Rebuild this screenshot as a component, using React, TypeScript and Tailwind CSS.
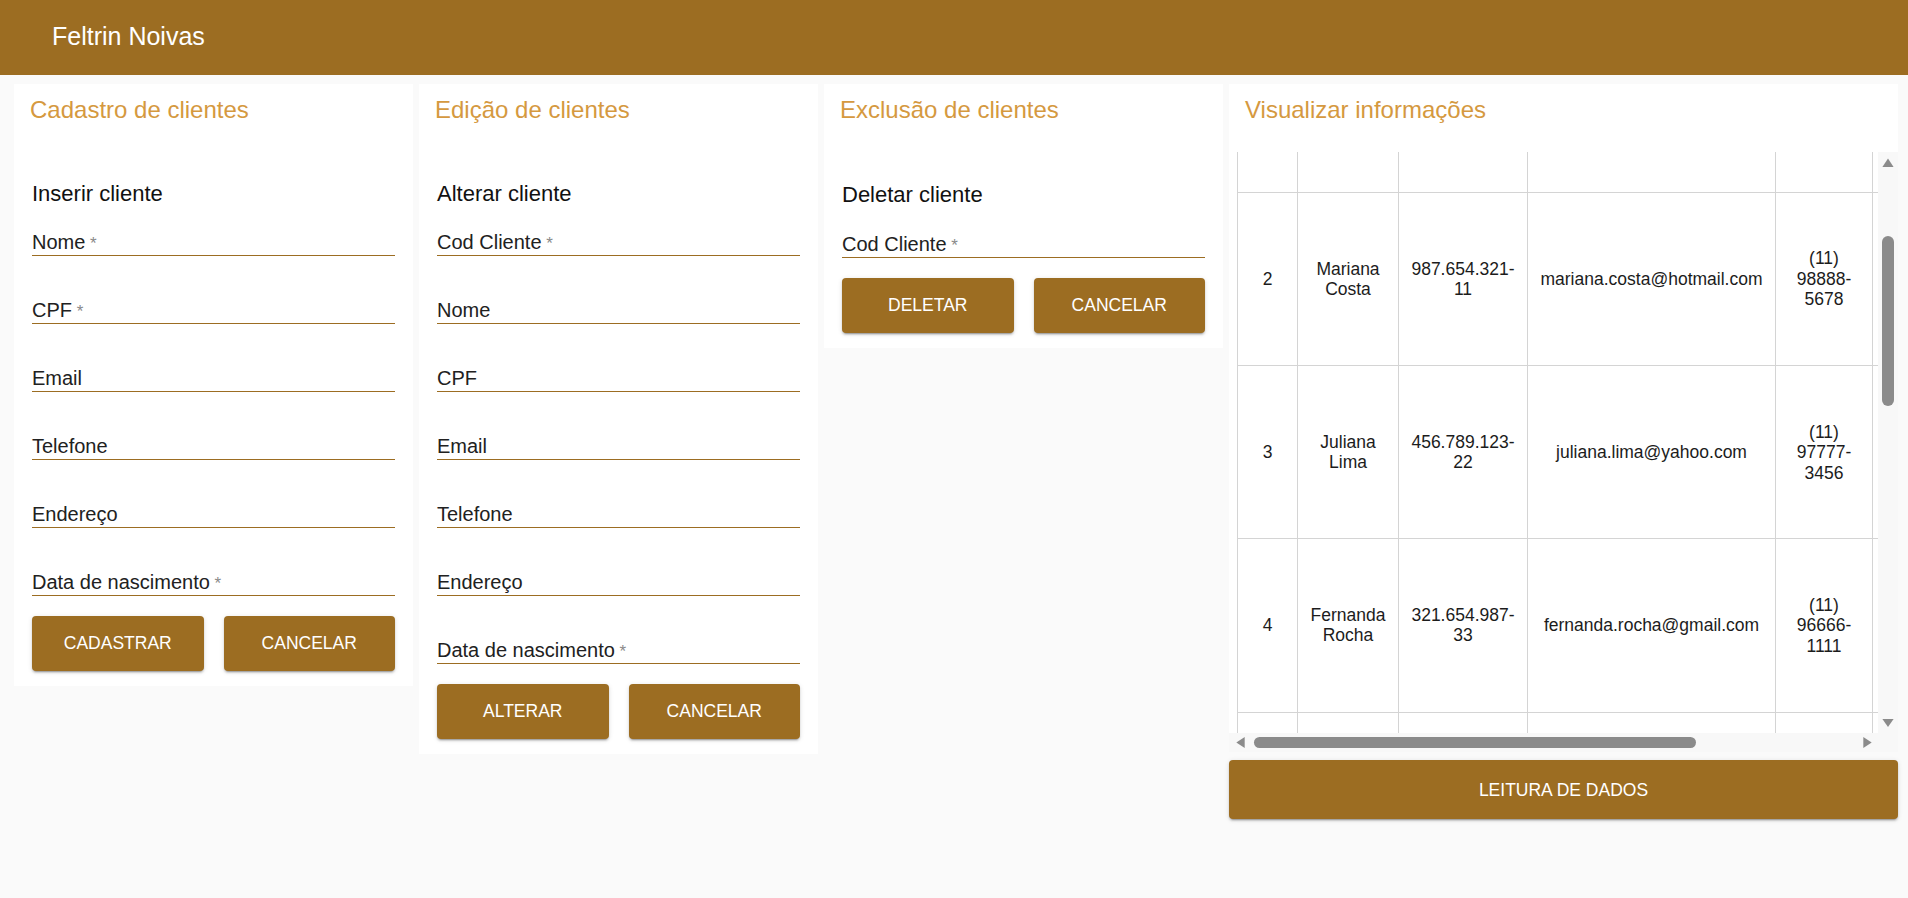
import React from 'react';

type Field = { label: string; required?: boolean };

type Row = {
  id: string;
  nome: string[];
  cpf: string[];
  email: string[];
  telefone: string[];
};

// rows 1 and 5 are scrolled mostly out of view, only their borders show
const rows: Row[] = [
  { id: '', nome: [], cpf: [], email: [], telefone: [] },
  { id: '2', nome: ['Mariana', 'Costa'], cpf: ['987.654.321-', '11'], email: ['mariana.costa@hotmail.com'], telefone: ['(11)', '98888-', '5678'] },
  { id: '3', nome: ['Juliana', 'Lima'], cpf: ['456.789.123-', '22'], email: ['juliana.lima@yahoo.com'], telefone: ['(11)', '97777-', '3456'] },
  { id: '4', nome: ['Fernanda', 'Rocha'], cpf: ['321.654.987-', '33'], email: ['fernanda.rocha@gmail.com'], telefone: ['(11)', '96666-', '1111'] },
  { id: '', nome: [], cpf: [], email: [], telefone: [] },
];

function InputField({ label, required, first }: Field & { first?: boolean }) {
  return (
    <div className={first ? 'pb-px border-b border-[#9c6d22]' : 'mt-[42px] pb-px border-b border-[#9c6d22]'}>
      <div className="h-[24px] text-[20px] leading-[24px] text-[#212121] whitespace-nowrap">
        {label}
        {required && <span className="text-[17px] text-[#8a8a8a]"> *</span>}
      </div>
    </div>
  );
}

function GoldButton({ children }: { children: React.ReactNode }) {
  return (
    <button className="h-[55px] rounded-[4px] bg-[#9c6d22] text-white text-[17.5px] font-medium uppercase shadow-[0_3px_1px_-2px_rgba(0,0,0,0.2),0_2px_2px_0_rgba(0,0,0,0.14),0_1px_5px_0_rgba(0,0,0,0.12)]">
      {children}
    </button>
  );
}

function FormCard({
  title,
  heading,
  fields,
  primary,
  lower,
}: {
  title: string;
  heading: string;
  fields: Field[];
  primary: string;
  lower?: boolean;
}) {
  return (
    <section className="w-[399px] shrink-0 self-start bg-white px-4 pt-[10px] pb-[15px]">
      <h2 className="text-[24px] leading-[32px] text-[#d5993f]">{title}</h2>
      <div className={lower ? 'mt-[54.7px] px-[2px]' : 'mt-[53.7px] px-[2px]'}>
        <h3 className="text-[22px] leading-[28px] text-[#111]">{heading}</h3>
        <div className={lower ? 'mt-[23px]' : 'mt-[22px]'}>
          {fields.map((f, i) => (
            <InputField key={f.label} {...f} first={i === 0} />
          ))}
        </div>
        <div className="mt-5 grid grid-cols-2 gap-5">
          <GoldButton>{primary}</GoldButton>
          <GoldButton>Cancelar</GoldButton>
        </div>
      </div>
    </section>
  );
}

function Cell({ lines, w }: { lines: string[]; w: string }) {
  return (
    <div className={`${w} shrink-0 border-r border-[#d4d4d4] flex flex-col items-center justify-center px-2 text-center text-[17.5px] leading-[20.5px] text-[#1c1c1c]`}>
      {lines.map((l) => (
        <span key={l} className="block whitespace-nowrap">{l}</span>
      ))}
    </div>
  );
}

function Arrow({ dir }: { dir: 'up' | 'down' | 'left' | 'right' }) {
  if (dir === 'up')
    return (
      <svg width="12" height="9" viewBox="0 0 12 9"><polygon points="6,0.5 11.6,9 0.4,9" fill="#8b8b8b" /></svg>
    );
  if (dir === 'down')
    return (
      <svg width="12" height="8" viewBox="0 0 12 8"><polygon points="0.4,0 11.6,0 6,8" fill="#8b8b8b" /></svg>
    );
  if (dir === 'left')
    return (
      <svg width="9" height="11" viewBox="0 0 9 11"><polygon points="8.7,0 8.7,11 0.3,5.5" fill="#8b8b8b" /></svg>
    );
  return (
    <svg width="9" height="11" viewBox="0 0 9 11"><polygon points="0.3,0 0.3,11 8.7,5.5" fill="#8b8b8b" /></svg>
  );
}

function DataCard() {
  return (
    <section className="min-w-0 flex-1 self-start flex flex-col">
      <div className="bg-white pt-[10px]">
        <h2 className="px-4 text-[24px] leading-[32px] text-[#d5993f]">Visualizar informações</h2>
        <div className="mt-[26.3px]">
          <div className="flex h-[580.4px]">
            <div className="min-w-0 flex-1 overflow-hidden pl-2">
              <div className="mt-[-132.5px] w-max border-l border-[#d4d4d4]">
                {rows.map((r, i) => (
                  <div key={i} className="flex h-[173.2px] border-b border-[#d4d4d4]">
                    <Cell w="w-[60px]" lines={r.id ? [r.id] : []} />
                    <Cell w="w-[101px]" lines={r.nome} />
                    <Cell w="w-[129px]" lines={r.cpf} />
                    <Cell w="w-[248px]" lines={r.email} />
                    <Cell w="w-[97px]" lines={r.telefone} />
                    <Cell w="w-[210px]" lines={[]} />
                    <Cell w="w-[140px]" lines={[]} />
                  </div>
                ))}
              </div>
            </div>
            <div className="w-[20px] shrink-0 bg-[#f8f8f8] flex flex-col items-center pt-[6px] pb-[6px]">
              <Arrow dir="up" />
              <div className="mt-[68.7px] h-[170px] w-[11.6px] rounded-full bg-[#8b8b8b]" />
              <div className="flex-1" />
              <Arrow dir="down" />
            </div>
          </div>
          <div className="flex h-[19px] items-center bg-[#f8f8f8] pl-[7px] pr-[26px]">
            <Arrow dir="left" />
            <div className="ml-[9px] h-[11px] w-[442px] rounded-full bg-[#8b8b8b]" />
            <div className="flex-1" />
            <Arrow dir="right" />
          </div>
        </div>
      </div>
      <button className="mt-[8.3px] h-[59.3px] rounded-[4px] bg-[#9c6d22] text-white text-[17.5px] font-medium uppercase shadow-[0_3px_1px_-2px_rgba(0,0,0,0.2),0_2px_2px_0_rgba(0,0,0,0.14),0_1px_5px_0_rgba(0,0,0,0.12)]">
        Leitura de dados
      </button>
    </section>
  );
}

export default function App() {
  return (
    <div className="min-h-[898px] bg-[#fafafa] font-['Liberation_Sans',Arial,sans-serif]">
      <header className="flex h-[75px] items-center bg-[#9c6d22] pb-[4px] pl-[52px]">
        <h1 className="text-[25px] leading-[32px] text-white">Feltrin Noivas</h1>
      </header>
      <main className="mt-[9px] flex items-start gap-[6px] pl-[14px] pr-[10px]">
        <FormCard
          title="Cadastro de clientes"
          heading="Inserir cliente"
          primary="Cadastrar"
          fields={[
            { label: 'Nome', required: true },
            { label: 'CPF', required: true },
            { label: 'Email' },
            { label: 'Telefone' },
            { label: 'Endereço' },
            { label: 'Data de nascimento', required: true },
          ]}
        />
        <FormCard
          title="Edição de clientes"
          heading="Alterar cliente"
          primary="Alterar"
          fields={[
            { label: 'Cod Cliente', required: true },
            { label: 'Nome' },
            { label: 'CPF' },
            { label: 'Email' },
            { label: 'Telefone' },
            { label: 'Endereço' },
            { label: 'Data de nascimento', required: true },
          ]}
        />
        <FormCard
          title="Exclusão de clientes"
          heading="Deletar cliente"
          primary="Deletar"
          lower
          fields={[{ label: 'Cod Cliente', required: true }]}
        />
        <DataCard />
      </main>
    </div>
  );
}
